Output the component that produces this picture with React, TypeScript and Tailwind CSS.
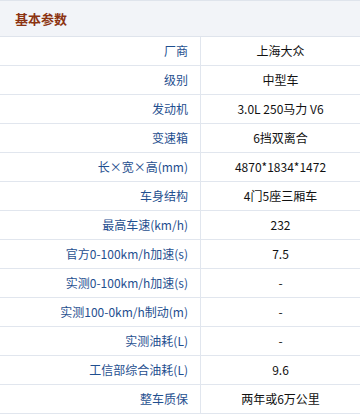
const rows: [string, string][] = [
	['厂商', '上海大众'],
	['级别', '中型车'],
	['发动机', '3.0L 250马力 V6'],
	['变速箱', '6挡双离合'],
	['长×宽×高(mm)', '4870*1834*1472'],
	['车身结构', '4门5座三厢车'],
	['最高车速(km/h)', '232'],
	['官方0-100km/h加速(s)', '7.5'],
	['实测0-100km/h加速(s)', '-'],
	['实测100-0km/h制动(m)', '-'],
	['实测油耗(L)', '-'],
	['工信部综合油耗(L)', '9.6'],
	['整车质保', '两年或6万公里'],
];

const App = () => {
	return (
		<div className="w-[360px] h-[414px] overflow-hidden bg-white text-[12px] font-['Noto_Sans_CJK_SC',sans-serif]">
			<div className="flex h-[37px] items-center border-t border-b border-[#dfe4ec] bg-[#f2f4f8] pl-[15px]">
				<span className="text-[13px] font-bold text-[#8c3311]">基本参数</span>
			</div>
			{rows.map(([label, value]) => (
				<div className="flex h-[29px] border-b border-[#e1e6ee]" key={label}>
					<div className="flex w-[201px] items-center justify-end border-r border-[#e1e6ee] pr-[12px] text-[#1f4f8f]">
						{label}
					</div>
					<div className="flex flex-1 items-center justify-center text-[#111]">{value}</div>
				</div>
			))}
		</div>
	);
};

export default App;
